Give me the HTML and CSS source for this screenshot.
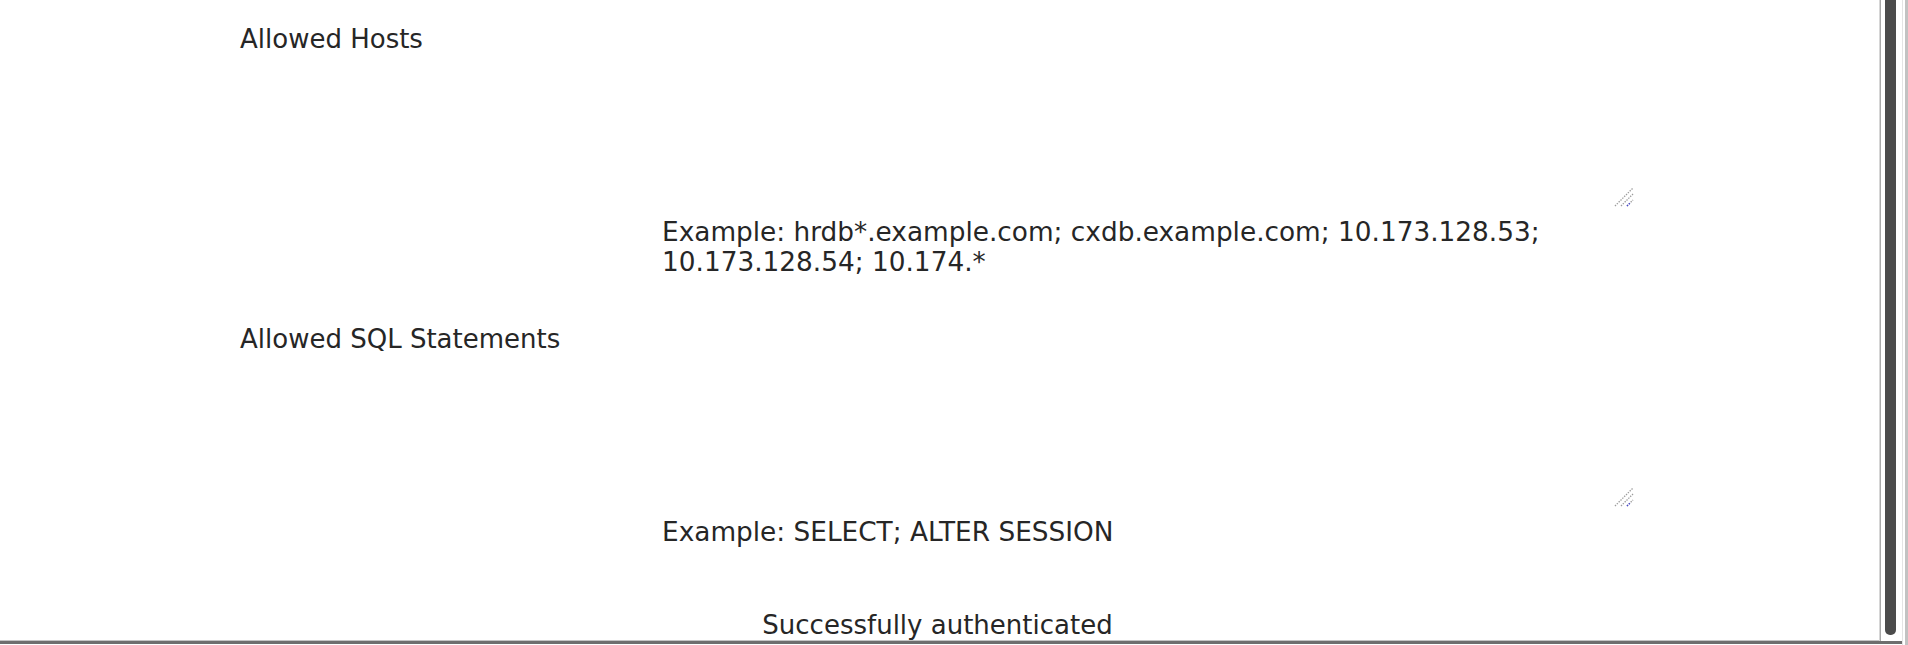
FILE: index.html
```html
<!DOCTYPE html>
<html lang="en">
<head>
<meta charset="utf-8">
<title>Connection settings</title>
<link rel="stylesheet" href="styles.css">
</head>
<body>
<div class="frame">
  <div class="window">
    <div class="content">
      <form class="form">
        <div class="row">
          <label class="label" for="hosts">Allowed Hosts</label>
          <div class="field">
            <div class="area-wrap">
              <textarea id="hosts" class="area"></textarea>
              <svg class="grip" width="20" height="20" viewBox="0 0 20 20" aria-hidden="true">
                <line x1="1" y1="19" x2="19" y2="1" class="g-line"/>
                <line x1="7" y1="19" x2="19" y2="7" class="g-line"/>
                <line x1="13" y1="19" x2="19" y2="13" class="g-line"/>
                <line x1="13" y1="19" x2="16" y2="16" class="g-blue"/>
              </svg>
            </div>
            <div class="hint">Example: hrdb*.example.com; cxdb.example.com; 10.173.128.53; 10.173.128.54; 10.174.*</div>
          </div>
        </div>
        <div class="row row-next">
          <label class="label" for="sql">Allowed SQL Statements</label>
          <div class="field">
            <div class="area-wrap">
              <textarea id="sql" class="area"></textarea>
              <svg class="grip" width="20" height="20" viewBox="0 0 20 20" aria-hidden="true">
                <line x1="1" y1="19" x2="19" y2="1" class="g-line"/>
                <line x1="7" y1="19" x2="19" y2="7" class="g-line"/>
                <line x1="13" y1="19" x2="19" y2="13" class="g-line"/>
                <line x1="13" y1="19" x2="16" y2="16" class="g-blue"/>
              </svg>
            </div>
            <div class="hint">Example: SELECT; ALTER SESSION</div>
          </div>
        </div>
        <div class="status">Successfully authenticated</div>
      </form>
    </div>
    <div class="scrollbar"><div class="thumb"></div></div>
  </div>
  <div class="edge"></div>
</div>
</body>
</html>
```
FILE: styles.css
```css
html, body {
  margin: 0;
  padding: 0;
  background: #ffffff;
}

body {
  font-family: "DejaVu Sans", "Liberation Sans", sans-serif;
  font-size: 26px;
  line-height: 30px;
  color: #262626;
  overflow: hidden;
}

.frame {
  display: flex;
  height: 645px;
  width: 1908px;
}

.window {
  flex: 1;
  display: flex;
  height: 641px;
  border-bottom: 3px solid #6e6e6e;
  box-shadow: 0 -1px 0 #c4c4c4 inset;
}

.content {
  flex: 1;
  overflow: hidden;
}

.form {
  margin: 0;
  padding: 24px 0 0 240px;
}

.row {
  display: grid;
  grid-template-columns: 422px 974px;
}

.row-next {
  margin-top: 47px;
}

.label {
  display: block;
}

.area-wrap {
  position: relative;
  width: 974px;
  height: 185px;
}

.area {
  display: block;
  width: 100%;
  height: 100%;
  box-sizing: border-box;
  border: none;
  padding: 0;
  margin: 0;
  resize: none;
  outline: none;
  background: transparent;
  font: inherit;
}

.grip {
  position: absolute;
  right: 2px;
  bottom: 2px;
}

.g-line {
  stroke: #9c9c9c;
  stroke-width: 1.3;
  stroke-dasharray: 1.4 1.2;
}

.g-blue {
  stroke: #4a4ad0;
  stroke-width: 1.4;
  stroke-dasharray: 1.4 1.2;
}

.hint {
  margin-top: 8px;
  font-size: 26.35px;
}

.status {
  margin-top: 63px;
  margin-left: -245px;
  text-align: center;
}

.scrollbar {
  width: 22px;
  border-left: 1px solid #a9a9a9;
  box-shadow: -1px 0 0 #d6d6d6;
  background: #ffffff;
  padding-left: 4px;
  box-sizing: border-box;
}

.thumb {
  width: 11px;
  height: 635px;
  background: #4b4b4b;
  border-radius: 0 0 5px 5px;
}

.edge {
  width: 6px;
  height: 645px;
  background: linear-gradient(to right, #e4e4e4 0, #e4e4e4 1px, #ffffff 1px, #ffffff 3px, #c2c2c2 3px);
}
```
